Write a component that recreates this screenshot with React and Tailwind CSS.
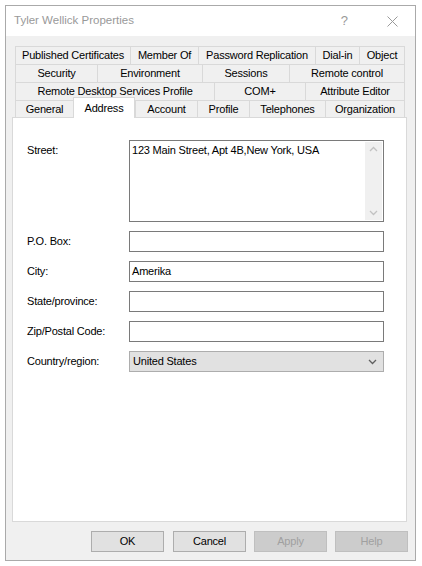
import React from 'react';

const tabRows = [
  [['Published Certificates', 115], ['Member Of', 68], ['Password Replication', 117], ['Dial-in', 44], ['Object', 46]],
  [['Security', 82], ['Environment', 105], ['Sessions', 87], ['Remote control', 116]],
  [['Remote Desktop Services Profile', 199], ['COM+', 91], ['Attribute Editor', 100]],
];

const frontRow = [['General', 58], ['Address', 62], ['Account', 62], ['Profile', 52], ['Telephones', 76], ['Organization', 80]];

const font = { fontFamily: '"Liberation Sans", Arial, sans-serif' };

const TabCell = ({ label, width, last }) => (
  <div
    className={`h-[18px] flex items-center justify-center bg-[#f0f0f0] border-t border-l border-[#d9d9d9] ${last ? 'border-r' : ''}`}
    style={{ width }}
  >
    {label}
  </div>
);

const Field = ({ label, value }) => (
  <>
    <div className="h-[21px] flex items-center">{label}</div>
    <div className="h-[21px] border border-[#7a7a7a] bg-white flex items-center pl-[2px]">{value}</div>
  </>
);

const Chevron = ({ up, color = '#c2c2c2' }) => (
  <svg width="9" height="6" viewBox="0 0 9 6">
    <path d={up ? 'M1 5 L4.5 1.5 L8 5' : 'M1 1 L4.5 4.5 L8 1'} fill="none" stroke={color} strokeWidth="1.3" />
  </svg>
);

export default function App() {
  return (
    <div className="w-[422px] h-[566px] bg-white pt-[5px] pl-[5px]" style={font}>
      <div className="w-[411px] h-[556px] border border-[#aaaaaa] flex flex-col bg-[#f0f0f0] text-[11px] tracking-[-0.2px] text-black">
        {/* title bar */}
        <div className="h-[30px] bg-white flex items-center pl-[8px] text-[11.5px] tracking-normal text-[#999999]">
          <span className="flex-1">Tyler Wellick Properties</span>
          <span className="text-[13px] mr-[39px]">?</span>
          <svg width="11" height="11" viewBox="0 0 11 11" className="mr-[17px]">
            <path d="M0.5 0.5 L10.5 10.5 M10.5 0.5 L0.5 10.5" stroke="#9a9a9a" strokeWidth="1" />
          </svg>
        </div>

        {/* tabs */}
        <div className="pt-[10px] pl-[9px]">
          {tabRows.map((row, i) => (
            <div key={i} className="flex">
              {row.map(([label, w], j) => (
                <TabCell key={label} label={label} width={w} last={j === row.length - 1} />
              ))}
            </div>
          ))}
          <div className="flex items-end h-[18px] relative z-10 -mb-px">
            {frontRow.map(([label, w], j) =>
              label === 'Address' ? (
                <div
                  key={label}
                  className="h-[21px] -mt-[3px] bg-white border-t border-l border-r border-[#d9d9d9] flex items-start justify-center pt-[2px]"
                  style={{ width: w }}
                >
                  {label}
                </div>
              ) : (
                <div
                  key={label}
                  className={`h-[18px] flex items-center justify-center bg-[#f0f0f0] border-t border-l border-b border-[#d9d9d9] ${j === frontRow.length - 1 ? 'border-r' : ''}`}
                  style={{ width: w }}
                >
                  {label}
                </div>
              )
            )}
          </div>
        </div>

        {/* panel */}
        <div className="ml-[6px] w-[395px] h-[405px] bg-white border border-[#d9d9d9] pt-[22px] pl-[14px]">
          <div className="grid grid-cols-[102px_255px] gap-y-[9px]">
            <div className="pt-[2px]">Street:</div>
            <div className="h-[82px] border border-[#7a7a7a] bg-white flex">
              <div className="flex-1 pl-[2px] pt-[1px]">123 Main Street, Apt 4B,New York, USA</div>
              <div className="w-[17px] my-px mr-px bg-[#f0f0f0] flex flex-col items-center justify-between py-[4px]">
                <Chevron up />
                <Chevron />
              </div>
            </div>
            <Field label="P.O. Box:" value="" />
            <Field label="City:" value="Amerika" />
            <Field label="State/province:" value="" />
            <Field label="Zip/Postal Code:" value="" />
            <div className="h-[21px] flex items-center">Country/region:</div>
            <div className="h-[21px] border border-[#adadad] bg-[#e1e1e1] flex items-center pl-[3px] pr-[6px]">
              <span className="flex-1">United States</span>
              <Chevron color="#606060" />
            </div>
          </div>
        </div>

        {/* buttons */}
        <div className="flex justify-end gap-[8px] pr-[7px] mt-[9px]">
          <button className="w-[73px] h-[21px] bg-[#e1e1e1] border border-[#adadad] mr-px">OK</button>
          <button className="w-[73px] h-[21px] bg-[#e1e1e1] border border-[#adadad]">Cancel</button>
          <button className="w-[73px] h-[21px] bg-[#cccccc] border border-[#bfbfbf] text-[#a0a0a0]">Apply</button>
          <button className="w-[73px] h-[21px] bg-[#cccccc] border border-[#bfbfbf] text-[#a0a0a0]">Help</button>
        </div>
      </div>
    </div>
  );
}
